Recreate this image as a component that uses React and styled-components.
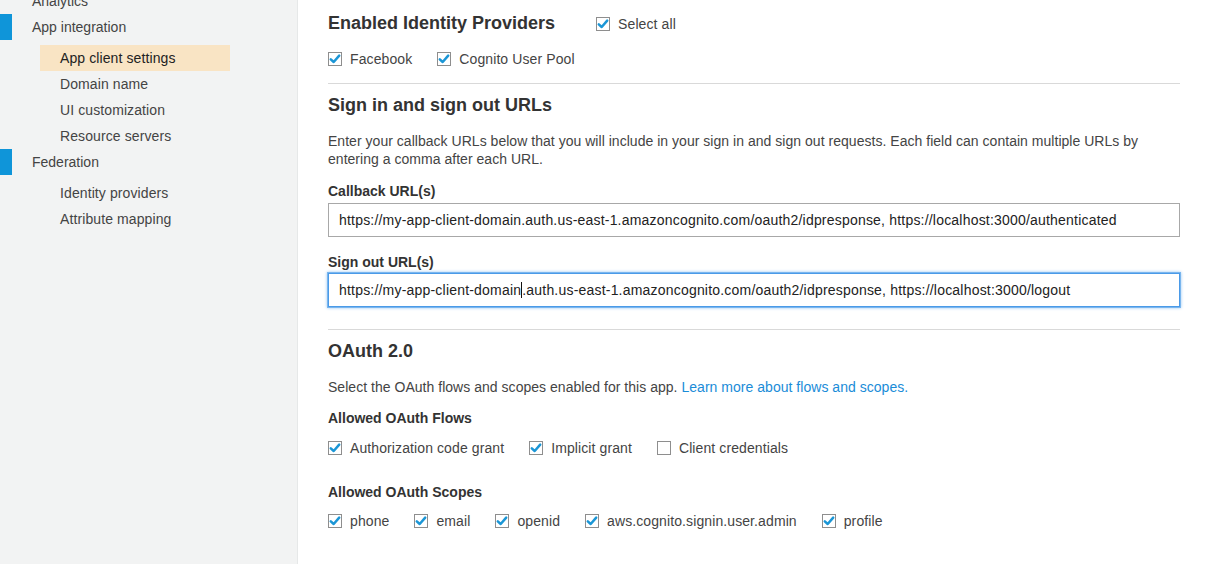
import styled, { createGlobalStyle } from 'styled-components'

const Global = createGlobalStyle`
body{margin:0;font-family:"Liberation Sans",Arial,sans-serif;color:#444;background:#fff;}
`

const Page = styled.div`
display:flex;
width:1205px;
height:564px;
overflow:hidden;
`

const Side = styled.nav`
width:297px;
flex-shrink:0;
background:#f2f3f3;
border-right:1px solid #e6e8e8;
margin-top:-12px;
display:flex;
flex-direction:column;
`

const Group = styled.div`
display:flex;
align-items:center;
height:26px;
padding-left:32px;
font-size:14px;
color:#444;
position:relative;
margin-top:${p => p.$gap || 0}px;
&:before{
  content:'';
  display:${p => p.$mark ? 'block' : 'none'};
  position:absolute;left:0;top:0;
  width:12px;height:26px;
  background:#0f95d9;
}
`

const Item = styled.div`
margin-left:40px;
width:190px;
height:26px;
padding-left:20px;
box-sizing:border-box;
display:flex;
align-items:center;
font-size:14px;
letter-spacing:0.1px;
color:${p => p.$on ? '#222' : '#444'};
background:${p => p.$on ? '#f9e4c4' : 'transparent'};
margin-top:${p => p.$gap || 0}px;
`

const Main = styled.main`
flex:1;
padding:13px 25px 0 30px;
`

const Title = styled.h2`
margin:${p => p.$top || 0}px 0 0;
font-size:18px;
font-weight:bold;
color:#333;
`

const TopRow = styled.div`
display:flex;
align-items:center;
gap:41px;
`

const Row = styled.div`
display:flex;
align-items:center;
gap:${p => p.$gap || 25}px;
margin-top:${p => p.$top || 0}px;
`

const Check = styled.label`
display:flex;
align-items:center;
gap:8px;
font-size:14px;
letter-spacing:0.1px;
color:#444;
`

const Box = styled.span`
width:14px;height:14px;
box-sizing:border-box;
border:1px solid #8e8e8e;
background:#fff;
display:flex;
align-items:center;
justify-content:center;
flex-shrink:0;
`

const Rule = styled.hr`
border:0;
border-top:1px solid #d9d9d9;
margin:${p => p.$top || 0}px 0 0;
`

const Text = styled.p`
margin:${p => p.$top || 0}px 0 0;
font-size:14px;
line-height:18px;
letter-spacing:0.03px;
color:#444;
a{color:#1a8cd8;text-decoration:none;}
`

const Label = styled.div`
font-size:14px;
font-weight:bold;
color:#333;
margin-top:${p => p.$top || 0}px;
`

const Input = styled.div`
margin-top:${p => p.$top || 4}px;
height:34px;
box-sizing:border-box;
border:1px solid ${p => p.$focus ? '#4a9ae8' : '#a8a8a8'};
box-shadow:${p => p.$focus ? '0 0 0 1px #7ab6ee, 0 0 3px 1px #9cc9f3' : 'none'};
display:flex;
align-items:center;
padding-left:10px;
font-size:14px;
letter-spacing:0.2px;
color:#222;
white-space:nowrap;
`

const Caret = styled.span`
display:inline-block;
width:1px;
height:16px;
background:#111;
vertical-align:-3px;
`

function Cb({ on = true, children }) {
  return (
    <Check>
      <Box>
        {on && (
          <svg width="12" height="12" viewBox="0 0 12 12">
            <path d="M1.8 6.3 L4.7 9 L10.2 2.6" fill="none" stroke="#1b96d6" strokeWidth="2.5" strokeLinecap="round" strokeLinejoin="round" />
          </svg>
        )}
      </Box>
      {children}
    </Check>
  )
}

export default function App() {
  return (
    <>
      <Global />
      <Page>
        <Side>
          <Group>Analytics</Group>
          <Group $mark>App integration</Group>
          <Item $on $gap={5}>App client settings</Item>
          <Item>Domain name</Item>
          <Item>UI customization</Item>
          <Item>Resource servers</Item>
          <Group $mark>Federation</Group>
          <Item $gap={5}>Identity providers</Item>
          <Item>Attribute mapping</Item>
        </Side>
        <Main>
          <TopRow>
            <Title>Enabled Identity Providers</Title>
            <Cb>Select all</Cb>
          </TopRow>
          <Row $top={17}>
            <Cb>Facebook</Cb>
            <Cb>Cognito User Pool</Cb>
          </Row>
          <Rule $top={16} />
          <Title $top={11}>Sign in and sign out URLs</Title>
          <Text $top={16}>
            Enter your callback URLs below that you will include in your sign in and sign out requests. Each field can contain multiple URLs by entering a comma after each URL.
          </Text>
          <Label $top={15}>Callback URL(s)</Label>
          <Input>https://my-app-client-domain.auth.us-east-1.amazoncognito.com/oauth2/idpresponse, https://localhost:3000/authenticated</Input>
          <Label $top={17}>Sign out URL(s)</Label>
          <Input $focus $top={3}>https://my-app-client-domain<Caret />.auth.us-east-1.amazoncognito.com/oauth2/idpresponse, https://localhost:3000/logout</Input>
          <Rule $top={22} />
          <Title $top={11}>OAuth 2.0</Title>
          <Text $top={16}>
            Select the OAuth flows and scopes enabled for this app. <a href="#">Learn more about flows and scopes.</a>
          </Text>
          <Label $top={14}>Allowed OAuth Flows</Label>
          <Row $top={14}>
            <Cb>Authorization code grant</Cb>
            <Cb>Implicit grant</Cb>
            <Cb on={false}>Client credentials</Cb>
          </Row>
          <Label $top={28}>Allowed OAuth Scopes</Label>
          <Row $top={13}>
            <Cb>phone</Cb>
            <Cb>email</Cb>
            <Cb>openid</Cb>
            <Cb>aws.cognito.signin.user.admin</Cb>
            <Cb>profile</Cb>
          </Row>
        </Main>
      </Page>
    </>
  )
}
